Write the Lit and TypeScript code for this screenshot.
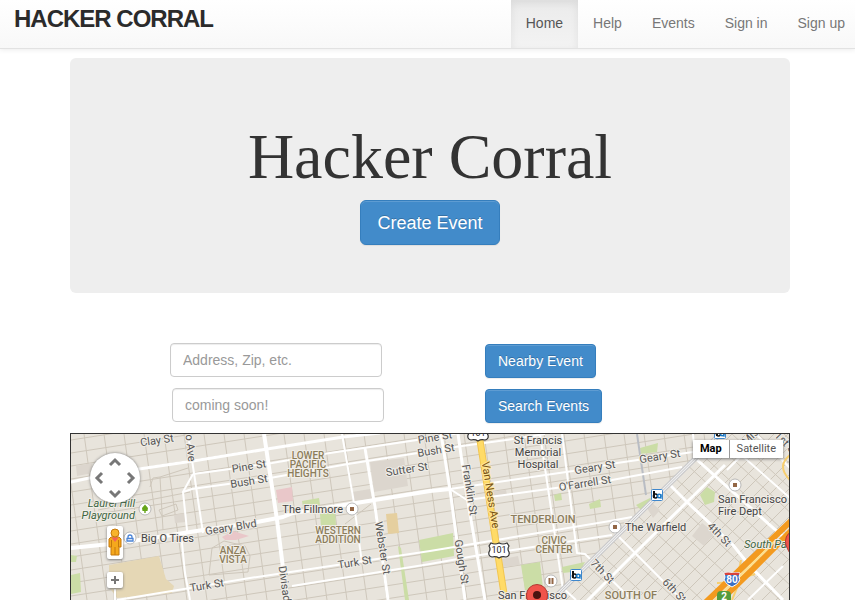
import { LitElement, html, svg, css } from "lit";
import { customElement, property } from "lit/decorators.js";

type Label = { t: string; x: number; y: number; r?: number; k?: string; a?: string };

const range = (from: number, to: number, step: number): number[] => {
  const out: number[] = [];
  for (let v = from; v <= to; v += step) out.push(v);
  return out;
};

// Side streets: the western grid is nearly square to the page, the one south of Market runs diagonally.
const westGrid =
  range(440, 720, 13).map((y) => `M71 ${y}L790 ${y - 112}`).join("") +
  range(44, 720, 20).map((x) => `M${x} 434L${x + 23} 600`).join("");
const southGrid =
  range(380, 800, 14).map((x) => `M${x + 60} 600L${x + 226} 434`).join("") +
  range(420, 800, 26).map((x) => `M${x} 434L${x + 178} 600`).join("");

const mainRoads = [
  "M71 548L120 543L203 530L257 522L283 517L293 513L350 504L430 491L450 489",
  "M264 434L277 520L287 600",
];

const avenues = [
  "M71 482L112 473L193 461L267 449L343 437L380 433",
  "M365 448L375 507L388 600",
  "M441 434L450 490L465 600",
  "M458 434L467 497L485 600",
  "M670 485L687 502L733 545L749 565L783 600",
  "M560 628L610 578L635 553L687 502L725 465",
  "M695 458L790 543",
];

const streets = [
  "M450 489L467 500L563 487L612 480L682 467",
  "M193 474L230 469L272 463L330 453L417 440L460 433",
  "M183 492L192 489L228 484L270 478L348 464L418 453L455 447L513 439L545 434",
  "M450 489L573 471L617 463L693 452",
  "M117 600L190 588L250 578L430 551L610 521L632 517",
  "M292 586L430 564L480 555L612 535",
  "M188 434L192 460L203 533",
  "M193 474L183 492L187 530L182 543L185 573L190 600",
  "M342 434L353 497L362 563",
  "M540 434L563 590",
  "M562 434L577 553L585 554L632 600",
  "M693 434L695 458",
  "M730 445L790 498",
  "M615 533L682 600",
  "M563 588L576 600",
  "M756 434L790 468",
  "M727 470L757 440",
  "M783 566L748 600",
];

const areas: [string, string][] = [
  ["#e5d7b5", "M109 565L159 556L166 579L174 586L172 593L117 598L109 587Z"],
  ["#cbdda6", "M71 555L77 556L76 562L71 562Z"],
  ["#cbdda6", "M71 575L80 573L81 592L71 594Z"],
  ["#e9c7c9", "M222 537L233 531L249 536L236 540L225 540Z"],
  ["#e9c7c9", "M276 490L292 487L293 501L278 503Z"],
  ["#cbdda6", "M302 501L319 498L320 505L303 507Z"],
  ["#cbdda6", "M320 514L335 511L336 525L321 527Z"],
  ["#e5cf9f", "M386 514L397 513L399 533L388 534Z"],
  ["#cbdda6", "M419 540L453 533L454 556L422 562Z"],
  ["#cbdda6", "M398 546L401 548L409 600L405 600Z"],
  ["#dcd6ce", "M370 462L404 458L408 486L374 492Z"],
  ["#dcd6ce", "M352 492L370 489L372 499L354 501Z"],
  ["#dcd6ce", "M491 492L506 490L507 495L493 497Z"],
  ["#dcd6ce", "M174 515L185 513L186 522L175 523Z"],
  ["#dcd6ce", "M502 559L518 556L520 565L503 567Z"],
  ["#cbdda6", "M554 495L561 493L562 500L555 501Z"],
  ["#cbdda6", "M589 504L600 499L601 507L590 509Z"],
  ["#cbdda6", "M521 565L540 562L543 588L525 590Z"],
  ["#cbdda6", "M562 567L585 562L580 571L563 573Z"],
  ["#cbdda6", "M640 448L658 443L657 452L641 454Z"],
  ["#cbdda6", "M636 505L650 498L654 500L642 511Z"],
  ["#dcd6ce", "M647 508L652 503L660 510L653 518Z"],
  ["#dcd6ce", "M692 536L702 523L715 533L704 546Z"],
  ["#dcd6ce", "M76 466L92 463L93 473L77 476Z"],
  ["#cbdda6", "M700 495L707 487L715 492L714 502L705 505Z"],
];

const labels: Label[] = [
  { t: "Clay St", x: 157, y: 441, r: -8 },
  { t: "o Ave", x: 190, y: 448, r: 84 },
  { t: "Pine St", x: 249, y: 467, r: -9 },
  { t: "Bush St", x: 249, y: 482, r: -9 },
  { t: "Pine St", x: 435, y: 438, r: -9 },
  { t: "Bush St", x: 436, y: 451, r: -9 },
  { t: "Sutter St", x: 407, y: 470, r: -9 },
  { t: "Geary Blvd", x: 231, y: 528, r: -9 },
  { t: "Turk St", x: 207, y: 586, r: -9 },
  { t: "Turk St", x: 355, y: 563, r: -9 },
  { t: "Divisadero St", x: 286, y: 598, r: 82 },
  { t: "Webster St", x: 382, y: 548, r: 81 },
  { t: "Franklin St", x: 469, y: 490, r: 81 },
  { t: "Gough St", x: 461, y: 562, r: 81 },
  { t: "Geary St", x: 595, y: 468, r: -9 },
  { t: "O'Farrell St", x: 585, y: 484, r: -9 },
  { t: "Geary St", x: 660, y: 457, r: -9 },
  { t: "Mission", x: 758, y: 430, r: -45 },
  { t: "1st St", x: 786, y: 444, r: 45 },
  { t: "4th St", x: 719, y: 535, r: 46 },
  { t: "6th St", x: 674, y: 591, r: 46 },
  { t: "7th St", x: 602, y: 572, r: 46 },
  { t: "Van Ness Ave", x: 490, y: 495, r: 81, k: "avenue" },
  { t: "The Fillmore", x: 343, y: 513, k: "place", a: "end" },
  { t: "Big O Tires", x: 141, y: 542, k: "place", a: "start" },
  { t: "The Warfield", x: 625, y: 531, k: "place", a: "start" },
  { t: "San Francisco", x: 718, y: 503, k: "place", a: "start" },
  { t: "Fire Dept", x: 718, y: 515, k: "place", a: "start" },
  { t: "St Francis", x: 538, y: 444, k: "place" },
  { t: "Memorial", x: 538, y: 456, k: "place" },
  { t: "Hospital", x: 538, y: 468, k: "place" },
  { t: "San Francisco", x: 498, y: 599, k: "place", a: "start" },
  { t: "Laurel Hill", x: 135, y: 507, k: "park", a: "end" },
  { t: "Playground", x: 135, y: 519, k: "park", a: "end" },
  { t: "South Park", x: 744, y: 548, k: "park", a: "start" },
  { t: "LOWER", x: 308, y: 459, k: "area" },
  { t: "PACIFIC", x: 308, y: 468, k: "area" },
  { t: "HEIGHTS", x: 308, y: 477, k: "area" },
  { t: "WESTERN", x: 338, y: 534, k: "area" },
  { t: "ADDITION", x: 338, y: 543, k: "area" },
  { t: "ANZA", x: 233, y: 554, k: "area" },
  { t: "VISTA", x: 233, y: 563, k: "area" },
  { t: "TENDERLOIN", x: 543, y: 523, k: "area wide" },
  { t: "CIVIC", x: 554, y: 544, k: "area" },
  { t: "CENTER", x: 554, y: 553, k: "area" },
  { t: "SOUTH OF", x: 631, y: 599, k: "area wide" },
];

@customElement("city-map")
export class CityMap extends LitElement {
  static styles = css`
    :host { display: block; position: relative; overflow: hidden; background: #e8e4dc; font-family: Roboto, "Liberation Sans", sans-serif; }
    .canvas { display: block; width: 100%; height: 100%; }
    .grid { fill: none; stroke: #cec7bb; stroke-width: 1; }
    .road { fill: none; stroke: #fff; stroke-width: 2; stroke-linejoin: round; }
    .road.avenue { stroke-width: 3; }
    .road.main { stroke-width: 4; }
    .label { font-size: 11px; fill: #555; stroke: #f1eee8; stroke-width: 2px; stroke-linejoin: round; paint-order: stroke; text-anchor: middle; }
    .label.start { text-anchor: start; }
    .label.end { text-anchor: end; }
    .label.place { fill: #444; }
    .label.park { fill: #3d6540; font-style: italic; }
    .label.area { fill: #8c7d5b; font-size: 10px; font-weight: 500; }
    .label.wide { font-size: 11px; }
    .label.avenue { fill: #775010; stroke: #ffe79b; }
    .shield { font-size: 9px; fill: #222; text-anchor: middle; }
    .shield.light { font-size: 10px; fill: #fff; font-weight: 700; }
    .pan, .pegman, .zoom, .types { position: absolute; }
    button { margin: 0; padding: 0; border: 0; background: none; font: inherit; cursor: pointer; }
    .pan { box-sizing: border-box; left: 19px; top: 19px; width: 50px; height: 50px; padding: 3px; border-radius: 50%; background: #fff; box-shadow: 0 0 3px #777; display: grid; grid-template-columns: repeat(3, 1fr); grid-template-rows: repeat(3, 1fr); }
    .pan button { min-width: 0; min-height: 0; display: flex; align-items: center; justify-content: center; }
    .pan svg { width: 14px; height: 14px; fill: none; stroke: #777; stroke-width: 3; flex: none; }
    .up { grid-area: 1 / 2; }
    .left { grid-area: 2 / 1; }
    .right { grid-area: 2 / 3; }
    .down { grid-area: 3 / 2; }
    .pegman, .zoom { background: #fff; border-radius: 2px; box-shadow: 0 1px 3px #777; }
    .pegman { left: 36px; top: 92px; width: 16px; height: 33px; }
    .pegman svg { display: block; width: 16px; height: 33px; }
    .zoom { left: 36px; top: 138px; width: 16px; height: 16px; }
    .zoom svg { display: block; width: 16px; height: 16px; }
    .track { position: absolute; left: 43px; top: 155px; width: 2px; bottom: 0; background: #fff; box-shadow: 0 0 1px #777; }
    .types { right: 6px; top: 6px; display: flex; background: #fff; box-shadow: 0 1px 3px #777; font-size: 11px; line-height: 18px; }
    .types button { padding: 0 7px; color: #555; }
    .types .on { color: #000; font-weight: 700; border-right: 1px solid #999; }
  `;

  private label(l: Label) {
    const turn = l.r ? `rotate(${l.r} ${l.x} ${l.y}) translate(0 3)` : "";
    return svg`<text class="label ${l.k ?? ""} ${l.a ?? ""}" x=${l.x} y=${l.y} transform=${turn}>${l.t}</text>`;
  }

  private dot(x: number, y: number) {
    return svg`<circle cx=${x} cy=${y} r="6" fill="#fff" stroke="#aaa" stroke-width=".8"/><rect x=${x - 2} y=${y - 2} width="4" height="4" fill="#936746"/>`;
  }

  private station(x: number, y: number) {
    return svg`<rect x=${x - 5.5} y=${y - 5.5} width="11" height="11" rx="1" fill="#fff" stroke="#3f87cc"/>
      <path d="M${x - 3} ${y - 4}V${y + 3}" stroke="#111" stroke-width="2"/>
      <circle cx=${x - 1.5} cy=${y + 1} r="2" fill="none" stroke="#111" stroke-width="1.6"/>
      <circle cx=${x + 2.2} cy=${y + 1} r="1.8" fill="none" stroke="#1677c4" stroke-width="1.4"/>
      <path d="M${x + 4} ${y - 1}V${y + 4}" stroke="#1677c4"/>`;
  }

  private route101(x: number, y: number) {
    return svg`<path transform="translate(${x} ${y})" d="M-8 -7Q-4 -5 0 -7Q4 -5 8 -7L10 -4Q8 -1 10 2Q11 6 7 7Q3 6 0 8Q-3 6 -7 7Q-11 6 -10 2Q-8 -1 -10 -4Z" fill="#fff" stroke="#333" stroke-width="1.2"/>
      <text class="shield" x=${x} y=${y + 3}>101</text>`;
  }

  private pin(x: number, y: number) {
    return svg`<path transform="translate(${x} ${y})" d="M0 28C-1 15 -10.500 10 -10.500 0A10.500 10.500 0 0 1 10.500 0C10.500 10 1 15 0 28Z" fill="#f0544b" stroke="#b23a33"/>
      <circle cx=${x} cy=${y} r="4" fill="#4a1310"/>`;
  }

  private arrow(name: string, d: string, text: string) {
    return html`<button class=${name} type="button" aria-label=${text}><svg viewBox="0 0 14 14"><path d=${d}></path></svg></button>`;
  }

  render() {
    return html`
      <svg class="canvas" viewBox="71 434 718 166" preserveAspectRatio="xMidYMid slice" role="img" aria-label="Map of San Francisco">
        <defs>
          <clipPath id="west"><path d="M71 434H718L550 600H71Z"></path></clipPath>
          <clipPath id="south"><path d="M720 434H790V600H552Z"></path></clipPath>
        </defs>
        <g clip-path="url(#west)"><path class="grid" d=${westGrid}></path></g>
        <g clip-path="url(#south)"><path class="grid" d=${southGrid}></path></g>
        ${areas.map(([c, d]) => svg`<path fill=${c} d=${d}/>`)}
        <path class="grid" d="M150 487L153 478L160 477L163 530M160 477L188 468M159 510L176 504L178 510L162 516ZM345 524L371 504M98 510L190 492M209 575L212 548L224 541L245 546L250 556L248 572Z"></path>
        <path d="M637 434L646 495" stroke="#b9bdc4" stroke-width="2" fill="none"></path>
        ${streets.map((d) => svg`<path class="road" d=${d}/>`)}
        ${avenues.map((d) => svg`<path class="road avenue" d=${d}/>`)}
        ${mainRoads.map((d) => svg`<path class="road main" d=${d}/>`)}
        <path d="M720 434L552 600" stroke="#c6c6c8" stroke-width="5" fill="none"></path>
        <path d="M720 434L552 600" stroke="#f0f0f0" stroke-width="3" fill="none"></path>
        <path d="M720 434L552 600" stroke="#c6c6c8" stroke-width="1" fill="none"></path>
        <path d="M479 434L505 600" stroke="#f2c650" stroke-width="7" fill="none"></path>
        <path d="M479 434L505 600" stroke="#ffdb67" stroke-width="5" fill="none"></path>
        <path d="M717 583Q738 584 741 560M732 600L741 578L755 574M790 455Q776 466 790 480" stroke="#f7cf70" stroke-width="2" fill="none"></path>
        <path d="M704 604L746 564L792 520" stroke="#f39a1f" stroke-width="6" fill="none"></path>
        <path d="M714 607L752 570L792 530" stroke="#f39a1f" stroke-width="6" fill="none"></path>
        <path d="M710 605L749 567L775 541" stroke="#ffe08a" stroke-width="2" fill="none"></path>
        ${labels.map((l) => this.label(l))}
        ${this.dot(352, 509)}${this.dot(615, 527)}${this.dot(735, 485)}
        ${this.station(657, 495)}${this.station(576, 575)}${this.station(720, 433)}
        <circle cx="551" cy="581" r="6" fill="#fff" stroke="#aaa" stroke-width=".8"></circle>
        <path d="M549.500 578V584M552.500 578V584" stroke="#936746" stroke-width="2"></path>
        <circle cx="145" cy="509" r="6" fill="#fff" stroke="#aaa" stroke-width=".8"></circle>
        <path d="M145 504.500L148 508L147.500 511H145.700V513H144.300V511H142.500L142 508Z" fill="#67a51b"></path>
        <circle cx="130" cy="538" r="6" fill="#fff" stroke="#aaa" stroke-width=".8"></circle>
        <path d="M128 538.500V537A2 2 0 0 1 132 537V538.500M127 538.500H133V541H127Z" fill="none" stroke="#4b84d6" stroke-width="1.3"></path>
        ${this.route101(499, 550)}${this.route101(478, 433)}
        <path d="M724 573Q728 572 732 573Q736 572 740 573L739 577Q742 582 732 587Q722 582 725 577Z" fill="#3b71c5" stroke="#fff"></path>
        <path d="M724.500 573Q728 572 732 573Q736 572 739.500 573L739 575H725Z" fill="#d8433b"></path>
        <text class="shield light" x="732" y="583">80</text>
        <rect x="717" y="591" width="14" height="12" rx="4" fill="#549b3d"></rect>
        <text class="shield light" x="724" y="600">2</text>
        ${this.pin(537, 595)}${this.pin(796, 541)}
      </svg>
      <div class="pan">
        ${this.arrow("up", "M2 9L7 4L12 9", "Pan up")}
        ${this.arrow("left", "M9 2L4 7L9 12", "Pan left")}
        ${this.arrow("right", "M5 2L10 7L5 12", "Pan right")}
        ${this.arrow("down", "M2 5L7 10L12 5", "Pan down")}
      </div>
      <div class="track"></div>
      <button class="pegman" type="button" aria-label="Street View">
        <svg viewBox="0 0 16 33">
          <path d="M4 11H12L14 13V21H12V29H4V21H2V13Z" fill="#f5a81c" stroke="#c5780c"></path>
          <path d="M4.500 11.500H11.500L8 16Z" fill="#f4605a"></path>
          <path d="M8 21V29M4.500 14V21M11.500 14V21" stroke="#c5780c"></path>
          <circle cx="8" cy="7" r="4" fill="#f7b32b" stroke="#c5780c"></circle>
        </svg>
      </button>
      <button class="zoom" type="button" aria-label="Zoom in"><svg viewBox="0 0 16 16"><path d="M8 4V12M4 8H12" stroke="#777" stroke-width="2"></path></svg></button>
      <div class="types">
        <button class="on" type="button">Map</button>
        <button type="button">Satellite</button>
      </div>
    `;
  }
}

@customElement("app-root")
export class AppRoot extends LitElement {
  @property() current = "Home";

  static styles = css`
    :host { display: flex; flex-direction: column; height: 100vh; overflow: hidden; background: #fff; color: #333; font: 14px/20px "Liberation Sans", Arial, sans-serif; }
    .bar { flex: none; height: 48px; display: flex; justify-content: space-between; padding-left: 14px; background: linear-gradient(#fff, #f8f8f8); border-bottom: 1px solid #e2e2e2; box-shadow: 0 1px 5px rgba(0, 0, 0, 0.08); }
    .logo { padding-top: 6px; font-size: 24px; line-height: 26px; font-weight: 700; letter-spacing: -1px; color: #2b2b2b; text-decoration: none; }
    .nav { display: flex; margin-right: -5px; }
    .link { padding: 13px 15px 15px; color: #777; text-decoration: none; }
    .link.current { color: #555; background: linear-gradient(#ebebeb, #f3f3f3); box-shadow: inset 0 3px 9px rgba(0, 0, 0, 0.075); }
    main { flex: 1; min-height: 0; display: flex; flex-direction: column; margin: 9px 65px 0 70px; }
    .hero { flex: none; display: flex; flex-direction: column; align-items: center; padding: 64px 60px 48px; border-radius: 6px; background: #eee; }
    h1 { margin: 0 0 8px; font: 400 64px/70px "Liberation Serif", serif; color: #333; }
    .btn { height: 34px; padding: 0 12px; border: 1px solid #357ebd; border-radius: 4px; background: #428bca; box-shadow: inset 0 1px 0 rgba(255, 255, 255, 0.15), 0 1px 1px rgba(0, 0, 0, 0.075); color: #fff; font: inherit; text-shadow: 0 -1px 0 rgba(0, 0, 0, 0.2); cursor: pointer; }
    .btn.large { height: 45px; padding: 0 16px; border-radius: 6px; font-size: 18px; }
    .search { flex: none; display: grid; grid-template-columns: 315px auto; justify-items: start; align-items: start; gap: 10px 0; padding: 50px 0 10px 100px; }
    .search .btn { margin-top: 1px; }
    .field { box-sizing: border-box; width: 212px; height: 34px; padding: 6px 12px; border: 1px solid #ccc; border-radius: 4px; background: #fff; box-shadow: inset 0 1px 1px rgba(0, 0, 0, 0.075); color: #555; font: inherit; }
    .field.later { margin-left: 2px; }
    .field::placeholder { color: #999; opacity: 1; }
    city-map { flex: 1; min-height: 0; border: solid #333; border-width: 1px 1px 0; }
  `;

  render() {
    const links = ["Home", "Help", "Events", "Sign in", "Sign up"];
    return html`
      <header class="bar">
        <a class="logo" href="#">HACKER CORRAL</a>
        <nav class="nav">
          ${links.map((l) => html`<a class="link ${l === this.current ? "current" : ""}" href="#">${l}</a>`)}
        </nav>
      </header>
      <main>
        <section class="hero">
          <h1>Hacker Corral</h1>
          <button class="btn large" type="button">Create Event</button>
        </section>
        <form class="search">
          <input class="field" type="text" aria-label="Address" placeholder="Address, Zip, etc." />
          <button class="btn" type="button">Nearby Event</button>
          <input class="field later" type="text" aria-label="Search events" placeholder="coming soon!" />
          <button class="btn" type="button">Search Events</button>
        </form>
        <city-map></city-map>
      </main>
    `;
  }
}
